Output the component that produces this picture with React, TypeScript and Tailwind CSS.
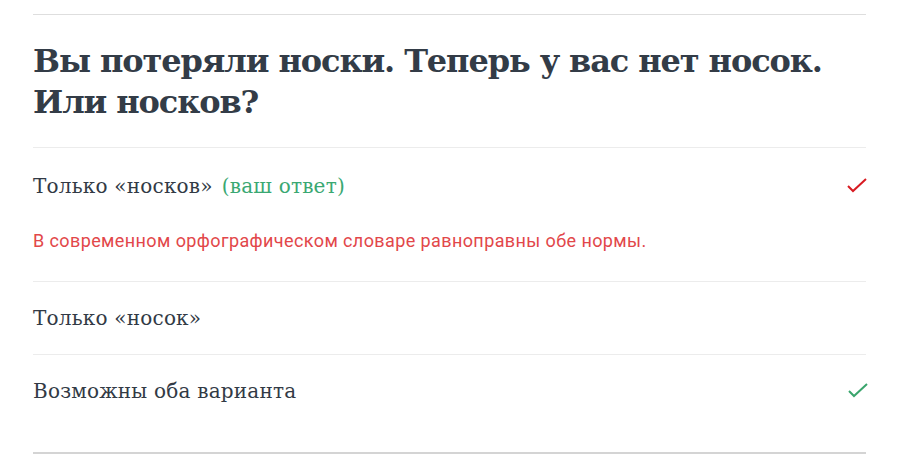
import React from 'react';

const serif = "font-['DejaVu_Serif',serif]";

const Check: React.FC<{ className: string }> = ({ className }) => (
  <svg width="20" height="16" viewBox="0 0 20 16" fill="none" className={className}>
    <polyline points="1,8 6,13 19,1" stroke="currentColor" strokeWidth="2" />
  </svg>
);

export default function App() {
  return (
    <div className="bg-white w-[899px] h-[464px] px-[33px] pt-[14px]">
      <div className="border-t border-[#dedede]" />
      <h1 className={`${serif} font-bold text-[32px] leading-[41px] text-[#333c47] pt-[26px] pb-[24px] tracking-[-1.1px]`}>
        Вы потеряли носки. Теперь у вас нет носок. Или носков?
      </h1>

      <div className="border-t border-[#ececec] pt-[25px] pb-[28px]">
        <div className="flex items-center justify-between h-[26px]">
          <p className={`${serif} text-[20px] text-[#323a45] tracking-[0.2px]`}>
            Только «носков»<span className="ml-[9px] text-[#3aa872]">(ваш ответ)</span>
          </p>
          <Check className="text-[#d81b22] mr-[-1px]" />
        </div>
        <p className="mt-[30px] font-['Roboto',sans-serif] text-[18px] leading-[24px] tracking-[0.4px] text-[#e2474a]">
          В современном орфографическом словаре равноправны обе нормы.
        </p>
      </div>

      <div className="border-t border-[#ececec] py-[23px]">
        <div className="flex items-center h-[26px]">
          <p className={`${serif} text-[20px] text-[#323a45] tracking-[0.2px]`}>Только «носок»</p>
        </div>
      </div>

      <div className="border-t border-[#ececec] pt-[23px] pb-[48px] border-b-2 border-b-[#d4d4d4]">
        <div className="flex items-center justify-between h-[26px]">
          <p className={`${serif} text-[20px] text-[#323a45] tracking-[0.2px]`}>Возможны оба варианта</p>
          <Check className="text-[#3aa56d] mr-[-2px]" />
        </div>
      </div>
    </div>
  );
}
